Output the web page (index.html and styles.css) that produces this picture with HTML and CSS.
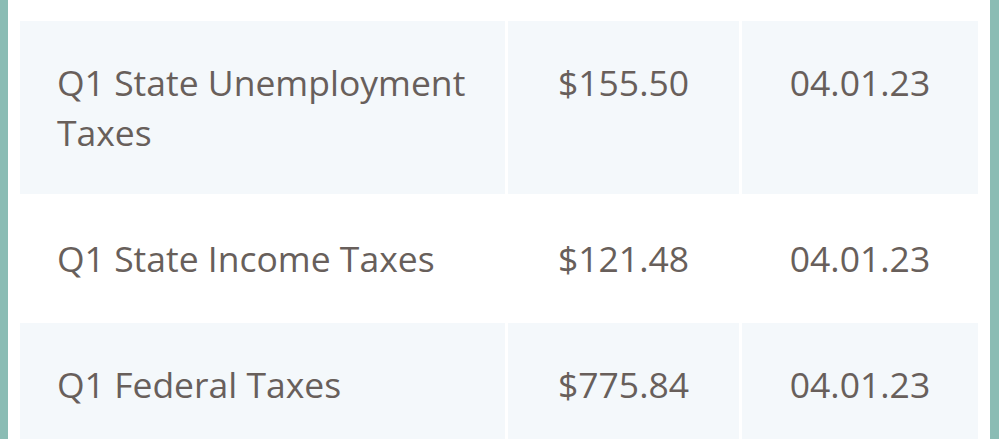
FILE: index.html
```html
<!DOCTYPE html>
<html lang="en">
<head>
<meta charset="utf-8">
<title>Taxes</title>
<link rel="stylesheet" href="styles.css">
</head>
<body>
<div class="frame">
  <table class="taxes">
    <colgroup>
      <col class="col-name">
      <col class="col-amount">
      <col class="col-date">
    </colgroup>
    <tbody>
      <tr class="shaded">
        <td class="name">Q1 State Unemployment Taxes</td>
        <td class="num">$155.50</td>
        <td class="num">04.01.23</td>
      </tr>
      <tr>
        <td class="name">Q1 State Income Taxes</td>
        <td class="num">$121.48</td>
        <td class="num">04.01.23</td>
      </tr>
      <tr class="shaded">
        <td class="name">Q1 Federal Taxes</td>
        <td class="num">$775.84</td>
        <td class="num">04.01.23</td>
      </tr>
    </tbody>
  </table>
</div>
</body>
</html>
```
FILE: styles.css
```css
html, body {
  margin: 0;
  padding: 0;
  height: 100%;
  background: #8abcb4;
  overflow: hidden;
}
body {
  font-family: "Open Sans", "Noto Sans", sans-serif;
  color: #685f5b;
}
.frame {
  margin-left: 8px;
  width: 982px;
  height: 100%;
  background: #ffffff;
  padding: 18px 0 0 9px;
  box-sizing: border-box;
}
.taxes {
  table-layout: fixed;
  width: 964px;
  border-collapse: separate;
  border-spacing: 3px;
}
.col-name { width: 485px; }
.col-amount { width: 231px; }
.col-date { width: 236px; }
.taxes td {
  padding: 36px 16px 37px 37px;
  font-size: 35.5px;
  line-height: 50px;
  vertical-align: top;
  background: #ffffff;
}
.taxes tr.shaded td {
  background: #f4f8fb;
}
.taxes td.num {
  text-align: center;
  padding-left: 6px;
  padding-right: 6px;
}
```
